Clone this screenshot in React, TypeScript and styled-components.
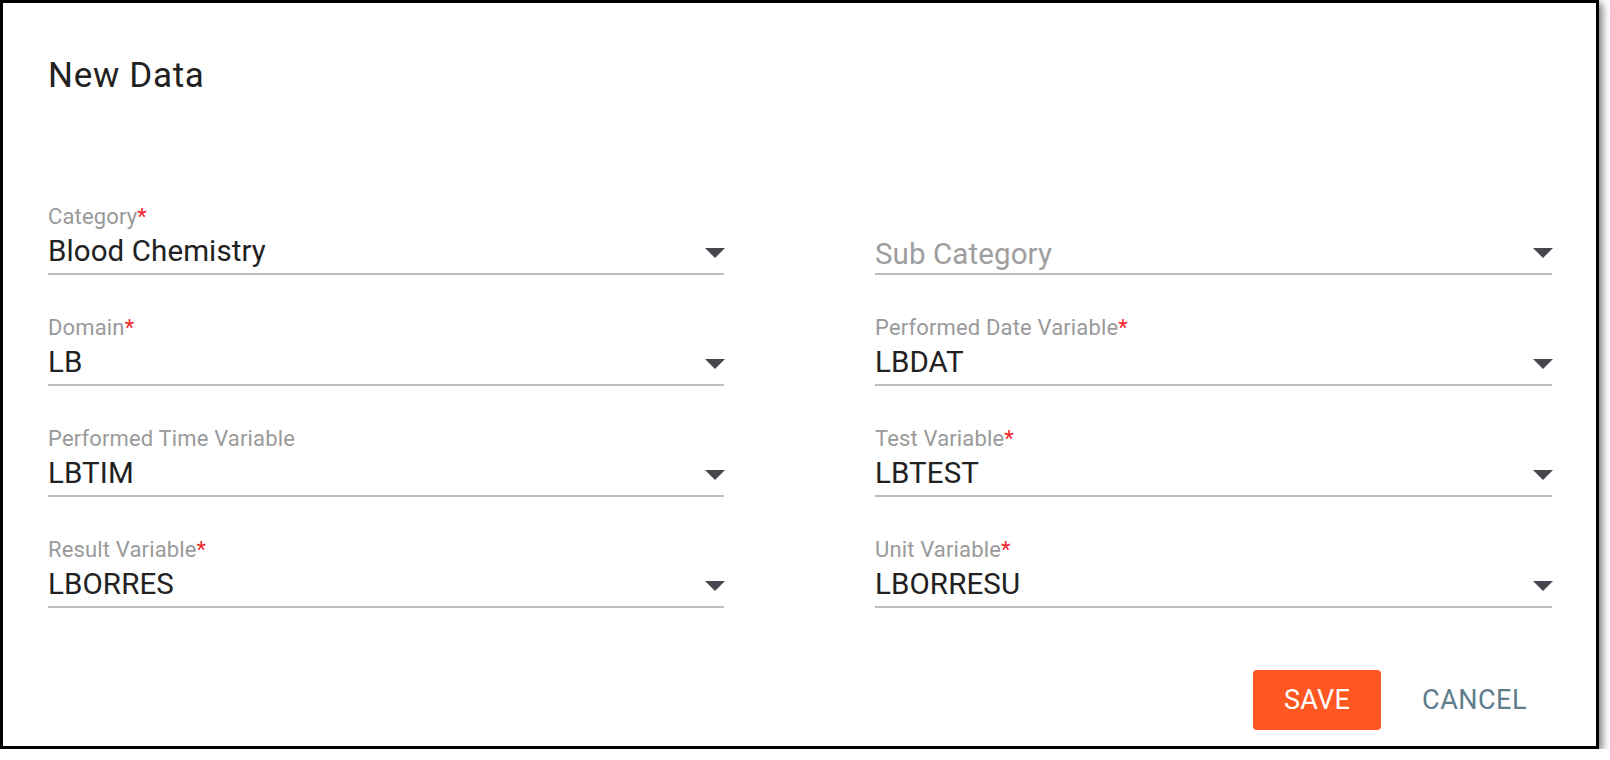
import styled, { createGlobalStyle } from "styled-components";

const GlobalStyle = createGlobalStyle`
  html, body {
    margin: 0;
    padding: 0;
    background: #fff;
  }
  body {
    font-family: Roboto, "Liberation Sans", Arial, sans-serif;
  }
`;

const Dialog = styled.div`
  box-sizing: border-box;
  width: 1599px;
  height: 749px;
  border: 3px solid #000;
  background: #fff;
  box-shadow: 3px 3px 8px rgba(0, 0, 0, 0.55);
  padding: 52px 0 0 45px;
  display: flex;
  flex-direction: column;
`;

const Title = styled.h2`
  margin: 0;
  font-size: 35px;
  line-height: 41px;
  font-weight: 400;
  letter-spacing: 0.7px;
  color: #212121;
`;

const Form = styled.div`
  display: grid;
  grid-template-columns: 676px 677px;
  column-gap: 151px;
  row-gap: 40px;
  margin-top: 108px;
`;

const Field = styled.div`
  display: flex;
  flex-direction: column;
  height: 71px;
`;

const Label = styled.div`
  font-size: 22px;
  line-height: 26px;
  letter-spacing: 0.15px;
  color: #9a9a9a;
  height: 26px;
  white-space: nowrap;
`;

const Star = styled.span`
  color: #f2262b;
`;

const ValueRow = styled.div`
  display: flex;
  align-items: center;
  margin-top: 3px;
  padding-bottom: 4px;
  border-bottom: 2px solid #bdbdbd;
`;

const Value = styled.div<{ $placeholder?: boolean }>`
  flex: 1;
  font-size: 29.5px;
  line-height: 36px;
  letter-spacing: 0.1px;
  color: ${(p) => (p.$placeholder ? "#9e9e9e" : "#212121")};
  padding-top: ${(p) => (p.$placeholder ? "3px" : "0")};
  margin-bottom: ${(p) => (p.$placeholder ? "-3px" : "0")};
  white-space: nowrap;
`;

const Arrow = styled.svg`
  flex: none;
  width: 20px;
  height: 10px;
  margin-top: 3px;
  margin-right: -1px;
  fill: #46464e;
`;

const Actions = styled.div`
  display: flex;
  justify-content: flex-end;
  gap: 25px;
  margin-top: 62px;
  padding-right: 53px;
`;

const Button = styled.button<{ $primary?: boolean }>`
  height: 60px;
  min-width: ${(p) => (p.$primary ? "128px" : "0")};
  padding: 0 16px;
  border: none;
  border-radius: 4px;
  background: ${(p) => (p.$primary ? "#ff5722" : "transparent")};
  color: ${(p) => (p.$primary ? "#fff" : "#607d8b")};
  font-family: Roboto, "Liberation Sans", Arial, sans-serif;
  font-size: 27px;
  font-weight: 400;
  letter-spacing: ${(p) => (p.$primary ? "0.3px" : "0.5px")};
  text-transform: uppercase;
  cursor: pointer;
`;

interface FieldDef {
  label: string;
  value?: string;
  required?: boolean;
}

const fields: FieldDef[] = [
  { label: "Category", value: "Blood Chemistry", required: true },
  { label: "Sub Category" },
  { label: "Domain", value: "LB", required: true },
  { label: "Performed Date Variable", value: "LBDAT", required: true },
  { label: "Performed Time Variable", value: "LBTIM" },
  { label: "Test Variable", value: "LBTEST", required: true },
  { label: "Result Variable", value: "LBORRES", required: true },
  { label: "Unit Variable", value: "LBORRESU", required: true },
];

const SelectField = ({ label, value, required }: FieldDef) => (
  <Field>
    <Label>
      {value !== undefined && (
        <>
          {label}
          {required && <Star>*</Star>}
        </>
      )}
    </Label>
    <ValueRow>
      <Value $placeholder={value === undefined}>{value ?? label}</Value>
      <Arrow viewBox="0 0 20 10">
        <polygon points="0,0 20,0 10,10" />
      </Arrow>
    </ValueRow>
  </Field>
);

const App = () => (
  <>
    <GlobalStyle />
    <Dialog>
      <Title>New Data</Title>
      <Form>
        {fields.map((f) => (
          <SelectField key={f.label} {...f} />
        ))}
      </Form>
      <Actions>
        <Button $primary>Save</Button>
        <Button>Cancel</Button>
      </Actions>
    </Dialog>
  </>
);

export default App;
